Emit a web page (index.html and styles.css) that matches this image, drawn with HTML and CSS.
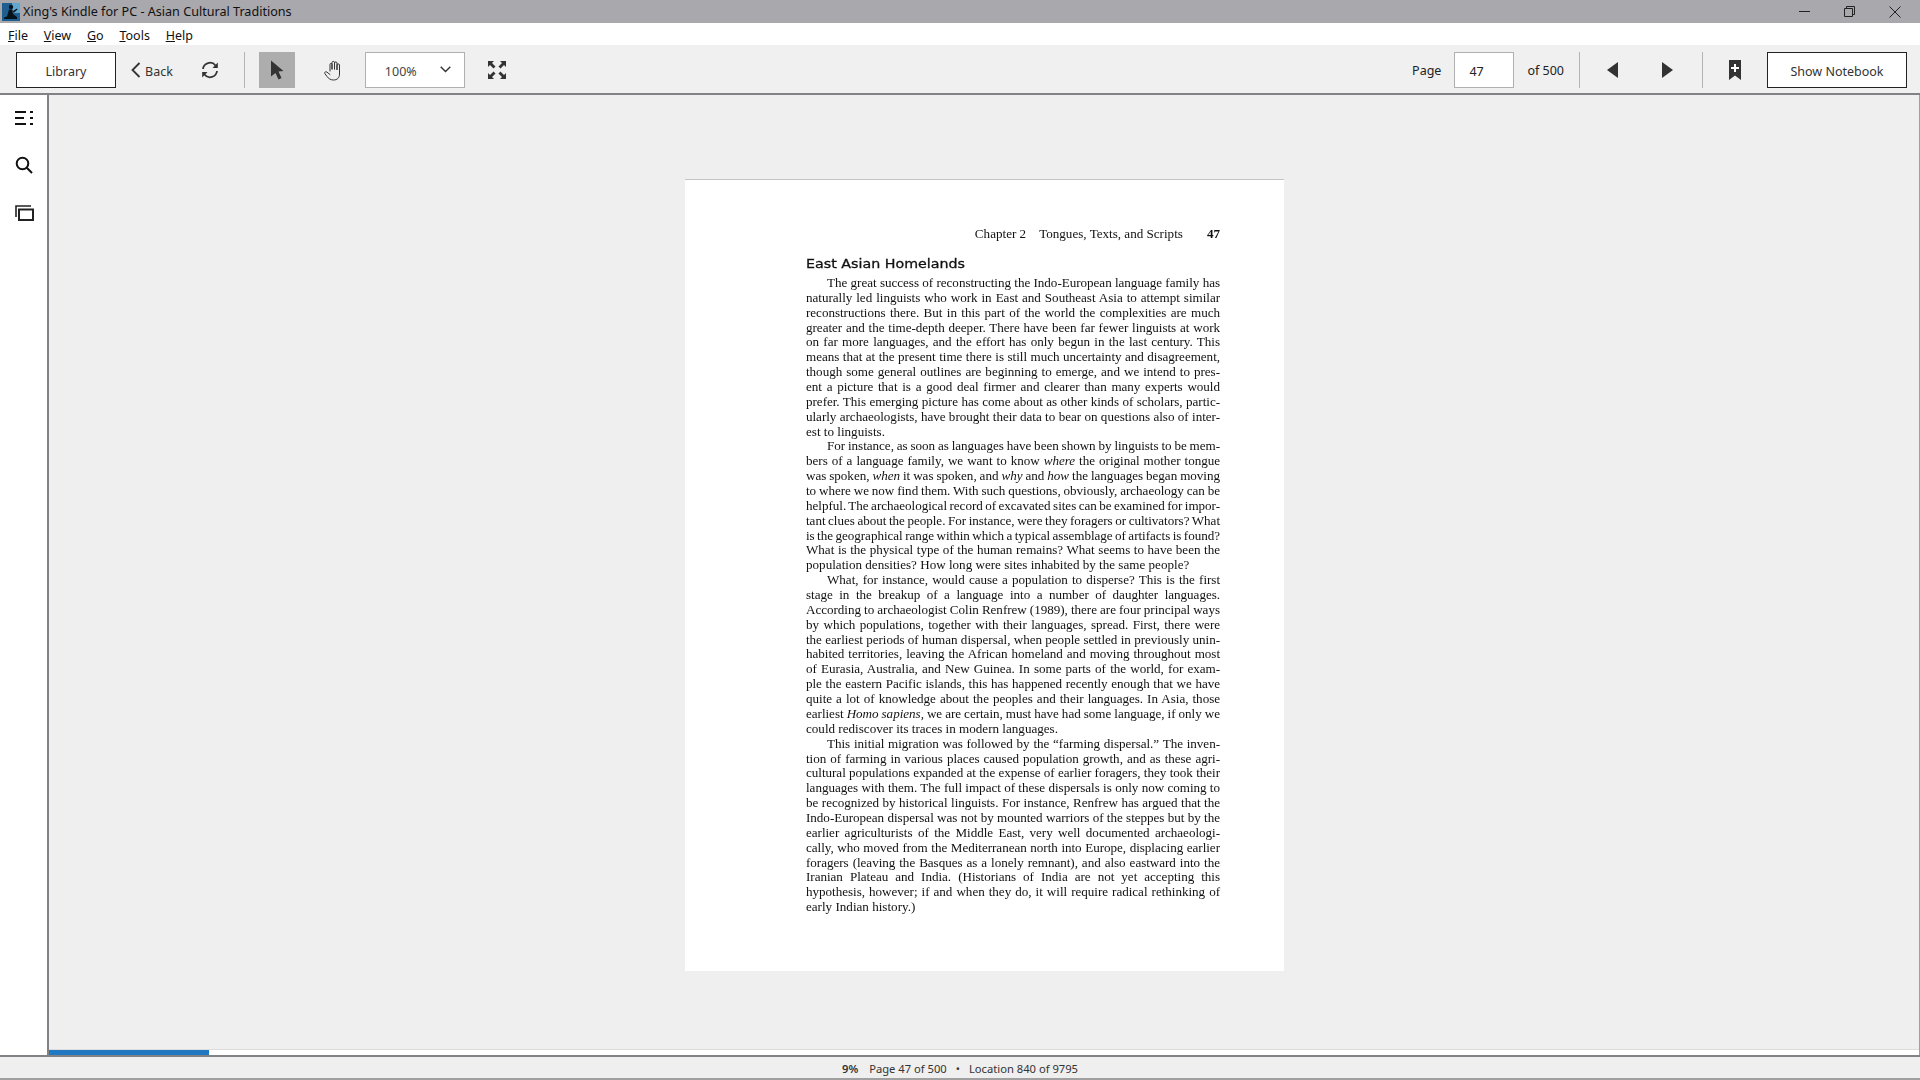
FILE: index.html

```html
<!DOCTYPE html>
<html lang="en">
<head>
  <meta charset="UTF-8" />
  <title>Xing's Kindle for PC - Asian Cultural Traditions</title>
  <link rel="stylesheet" href="styles.css">
</head>
<body>
  <div class="titlebar">
    <svg class="app-icon" width="18" height="18" viewBox="0 0 18 18">
      <rect width="18" height="18" fill="#1f5f8f"/>
      <rect x="10" y="0" width="8" height="10" fill="#5fa6d0"/>
      <circle cx="9" cy="4" r="2.2" fill="#06121c"/>
      <path d="M7 6.5 L10.5 6.5 L11 11 L15 14 L15 16 L2 16 L2 14.5 L5 13.5 Z" fill="#06121c"/>
      <path d="M11 8 L15 5.5 L15.5 6.5 L11.5 10 Z" fill="#06121c"/>
    </svg>
    <span class="title-text">Xing's Kindle for PC - Asian Cultural Traditions</span>
    <div class="window-btns">
      <svg width="11" height="11" viewBox="0 0 11 11"><path d="M0 5.5 H11" stroke="#222" fill="none"/></svg>
      <svg width="11" height="11" viewBox="0 0 11 11"><path d="M0.5 2.5 H8.5 V10.5 H0.5 Z M2.5 2.5 V0.5 H10.5 V8.5 H8.5" stroke="#222" fill="none"/></svg>
      <svg width="12" height="12" viewBox="0 0 12 12"><path d="M0.5 0.5 L11.5 11.5 M11.5 0.5 L0.5 11.5" stroke="#222" fill="none"/></svg>
    </div>
  </div>

  <div class="menubar">
    <span><u>F</u>ile</span>
    <span><u>V</u>iew</span>
    <span><u>G</u>o</span>
    <span><u>T</u>ools</span>
    <span><u>H</u>elp</span>
  </div>

  <div class="toolbar">
    <button class="box-btn library-btn">Library</button>
    <div class="back">
      <svg width="10" height="16" viewBox="0 0 10 16"><path d="M8.5 1 L1.5 8 L8.5 15" stroke="#333" stroke-width="1.8" fill="none"/></svg>
      <span>Back</span>
    </div>
    <svg class="sync-icon" width="18" height="18" viewBox="0 0 18 18">
      <path d="M2 8 A7 7 0 0 1 14.5 4.5" stroke="#333" stroke-width="1.8" fill="none"/>
      <path d="M16.8 1.5 V7 H11.5 Z" fill="#333"/>
      <path d="M16 10 A7 7 0 0 1 3.5 13.5" stroke="#333" stroke-width="1.8" fill="none"/>
      <path d="M1.2 16.5 V11 H6.5 Z" fill="#333"/>
    </svg>
    <div class="sep sep-left"></div>
    <div class="tool-active">
      <svg width="14" height="20" viewBox="0 0 14 20"><path d="M1 0.5 L13.5 11 L8.5 11.5 L11.5 18 L8.5 19.5 L5.5 13 L1 16.5 Z" fill="#333"/></svg>
    </div>
    <svg class="hand-icon" width="20" height="21" viewBox="0 0 20 21" fill="none" stroke="#333" stroke-width="1" stroke-linejoin="round" stroke-linecap="round">
      <path d="M6 11 V4.5 C6 3 8 3 8 4.5 V9 M8 9 V2.5 C8 1 10.500 1 10.500 2.500 V9 M10.500 9 V3 C10.500 1.600 13 1.600 13 3 V9.500 M13 9.500 V5 C13 3.600 15.500 3.600 15.500 5 V14 C15.500 18 13 20 9.500 20 C6.500 20 4.500 18.500 3 16.500 L0.800 13.500 C0.200 12.500 1.500 11 3 12.200 L6 14.500"/>
    </svg>
    <div class="zoom-select">
      <span>100%</span>
      <svg class="zoom-arrow" width="11" height="7" viewBox="0 0 11 7"><path d="M0.700 0.700 L5.500 5.500 L10.300 0.700" stroke="#333" stroke-width="1.400" fill="none"/></svg>
    </div>
    <svg class="full-icon" width="18" height="18" viewBox="0 0 18 18" fill="#333">
      <path d="M0 0 H6 L4 2 L7.500 5.500 L5.500 7.500 L2 4 L0 6 Z"/>
      <path d="M18 0 V6 L16 4 L12.500 7.500 L10.500 5.500 L14 2 L12 0 Z"/>
      <path d="M0 18 V12 L2 14 L5.500 10.500 L7.500 12.500 L4 16 L6 18 Z"/>
      <path d="M18 18 H12 L14 16 L10.500 12.500 L12.500 10.500 L16 14 L18 12 Z"/>
    </svg>

    <div class="toolbar-right">
      <span class="page-label">Page</span>
      <div class="page-input">47</div>
      <span class="page-of">of 500</span>
      <div class="sep"></div>
      <svg class="prev-icon" width="11" height="16" viewBox="0 0 11 16"><path d="M11 0 V16 L0 8 Z" fill="#333"/></svg>
      <svg class="next-icon" width="11" height="16" viewBox="0 0 11 16"><path d="M0 0 V16 L11 8 Z" fill="#333"/></svg>
      <div class="sep sep-second"></div>
      <svg class="mark-icon" width="12" height="20" viewBox="0 0 12 20">
        <path d="M0 0 H12 V20 L6 15.500 L0 20 Z" fill="#333"/>
        <path d="M5 4 H7 V7 H10 V9 H7 V12 H5 V9 H2 V7 H5 Z" fill="#fff"/>
      </svg>
      <button class="box-btn notebook-btn">Show Notebook</button>
    </div>
  </div>

  <div class="content">
    <div class="sidebar">
      <svg width="18" height="14" viewBox="0 0 18 14" fill="#111">
        <rect x="0" y="0" width="11" height="2"/><rect x="15" y="0" width="3" height="2"/>
        <rect x="0" y="6" width="9" height="2"/><rect x="15" y="6" width="3" height="2"/>
        <rect x="0" y="12" width="11" height="2"/><rect x="15" y="12" width="3" height="2"/>
      </svg>
      <svg width="18" height="18" viewBox="0 0 18 18" fill="none" stroke="#111" stroke-width="2">
        <circle cx="7.500" cy="7.500" r="5.800"/><path d="M11.800 11.800 L17 17"/>
      </svg>
      <svg class="cards-icon" width="19" height="16" viewBox="0 0 19 16" fill="none" stroke="#222" stroke-width="1.600">
        <rect x="4" y="4.500" width="14" height="10.500" stroke-width="2"/><path d="M1 12 V1 H16"/>
      </svg>
    </div>

    <div class="reader">
      <div class="reader-main">
        <div class="page">
          <div class="running-head"><span>Chapter 2</span><span class="head-title">Tongues, Texts, and Scripts</span><b>47</b></div>
          <h2><span>East Asian Homelands</span></h2>
          <div class="body-text">
            <div class="line indent">The great success of reconstructing the Indo-European language family has</div>
            <div class="line">naturally led linguists who work in East and Southeast Asia to attempt similar</div>
            <div class="line">reconstructions there. But in this part of the world the complexities are much</div>
            <div class="line">greater and the time-depth deeper. There have been far fewer linguists at work</div>
            <div class="line">on far more languages, and the effort has only begun in the last century. This</div>
            <div class="line">means that at the present time there is still much uncertainty and disagreement,</div>
            <div class="line">though some general outlines are beginning to emerge, and we intend to pres-</div>
            <div class="line">ent a picture that is a good deal firmer and clearer than many experts would</div>
            <div class="line">prefer. This emerging picture has come about as other kinds of scholars, partic-</div>
            <div class="line">ularly archaeologists, have brought their data to bear on questions also of inter-</div>
            <div class="line last">est to linguists.</div>
            <div class="line indent">For instance, as soon as languages have been shown by linguists to be mem-</div>
            <div class="line">bers of a language family, we want to know <i>where</i> the original mother tongue</div>
            <div class="line">was spoken, <i>when</i> it was spoken, and <i>why</i> and <i>how</i> the languages began moving</div>
            <div class="line">to where we now find them. With such questions, obviously, archaeology can be</div>
            <div class="line">helpful. The archaeological record of excavated sites can be examined for impor-</div>
            <div class="line">tant clues about the people. For instance, were they foragers or cultivators? What</div>
            <div class="line">is the geographical range within which a typical assemblage of artifacts is found?</div>
            <div class="line">What is the physical type of the human remains? What seems to have been the</div>
            <div class="line last">population densities? How long were sites inhabited by the same people?</div>
            <div class="line indent">What, for instance, would cause a population to disperse? This is the first</div>
            <div class="line">stage in the breakup of a language into a number of daughter languages.</div>
            <div class="line">According to archaeologist Colin Renfrew (1989), there are four principal ways</div>
            <div class="line">by which populations, together with their languages, spread. First, there were</div>
            <div class="line">the earliest periods of human dispersal, when people settled in previously unin-</div>
            <div class="line">habited territories, leaving the African homeland and moving throughout most</div>
            <div class="line">of Eurasia, Australia, and New Guinea. In some parts of the world, for exam-</div>
            <div class="line">ple the eastern Pacific islands, this has happened recently enough that we have</div>
            <div class="line">quite a lot of knowledge about the peoples and their languages. In Asia, those</div>
            <div class="line">earliest <i>Homo sapiens,</i> we are certain, must have had some language, if only we</div>
            <div class="line last">could rediscover its traces in modern languages.</div>
            <div class="line indent">This initial migration was followed by the “farming dispersal.” The inven-</div>
            <div class="line">tion of farming in various places caused population growth, and as these agri-</div>
            <div class="line">cultural populations expanded at the expense of earlier foragers, they took their</div>
            <div class="line">languages with them. The full impact of these dispersals is only now coming to</div>
            <div class="line">be recognized by historical linguists. For instance, Renfrew has argued that the</div>
            <div class="line">Indo-European dispersal was not by mounted warriors of the steppes but by the</div>
            <div class="line">earlier agriculturists of the Middle East, very well documented archaeologi-</div>
            <div class="line">cally, who moved from the Mediterranean north into Europe, displacing earlier</div>
            <div class="line">foragers (leaving the Basques as a lonely remnant), and also eastward into the</div>
            <div class="line">Iranian Plateau and India. (Historians of India are not yet accepting this</div>
            <div class="line">hypothesis, however; if and when they do, it will require radical rethinking of</div>
            <div class="line last">early Indian history.)</div>
          </div>
        </div>
      </div>
      <div class="progress"><div class="progress-fill"></div></div>
    </div>
  </div>

  <div class="statusbar">
    <span class="status-pct">9%</span>
    <span>Page 47 of 500</span>
    <span>•</span>
    <span>Location 840 of 9795</span>
  </div>
</body>
</html>
```

FILE: styles.css

```css
html, body {
  margin: 0;
  height: 100%;
}
body {
  display: flex;
  flex-direction: column;
  height: 1080px;
  overflow: hidden;
  font-family: 'Noto Sans', 'Open Sans', sans-serif;
  font-size: 12.5px;
  color: #222;
  background-color: #efefef;
}
button {
  font-family: inherit;
  font-size: inherit;
  color: inherit;
  cursor: pointer;
}
svg {
  display: block;
  flex-shrink: 0;
}

/* top window chrome */
.titlebar {
  display: flex;
  align-items: center;
  height: 23px;
  background-color: #a9a8ad;
  color: #111;
  font-size: 12.6px;
}
.app-icon {
  margin-left: 2px;
}
.title-text {
  margin-left: 3px;
}
.window-btns {
  display: flex;
  align-items: center;
  gap: 34px;
  margin-left: auto;
  margin-right: 19px;
}
.menubar {
  display: flex;
  align-items: center;
  gap: 15.800px;
  box-sizing: border-box;
  height: 22px;
  padding-left: 8px;
  padding-top: 3px;
  background-color: white;
  color: #111;
}

/* toolbar */
.toolbar {
  display: flex;
  align-items: center;
  height: 36px;
  padding: 7px 13px 5px 16px;
  background-color: #f0f0f0;
  border-bottom: 2px solid #808285;
}
.box-btn {
  height: 36px;
  padding: 2px 0 0;
  background-color: white;
  border: 1px solid #222;
  color: #333;
}
.library-btn {
  width: 100px;
}
.back {
  display: flex;
  align-items: center;
  gap: 4px;
  margin-left: 15px;
  color: #333;
}
.back span {
  padding-top: 2px;
}
.sync-icon {
  margin-left: 28px;
}
.sep {
  width: 1px;
  height: 36px;
  background-color: #b4b4b4;
}
.sep-left {
  margin-left: 25px;
}
.tool-active {
  display: flex;
  justify-content: center;
  align-items: center;
  width: 36px;
  height: 36px;
  margin-left: 14px;
  background-color: #adadad;
}
.hand-icon {
  margin-left: 29px;
}
.zoom-select {
  display: flex;
  align-items: center;
  justify-content: space-between;
  box-sizing: border-box;
  width: 100px;
  height: 36px;
  margin-left: 21px;
  padding: 2px 13px 0 19px;
  background-color: white;
  border: 1px solid #b0b0b0;
  color: #444;
}
.zoom-arrow {
  margin-top: -4px;
}
.full-icon {
  margin-left: 23px;
}
.toolbar-right {
  display: flex;
  align-items: center;
  margin-left: auto;
}
.page-label {
  padding-top: 1px;
}
.page-input {
  display: flex;
  align-items: center;
  box-sizing: border-box;
  width: 60px;
  height: 36px;
  margin-left: 13px;
  padding: 2px 0 0 14px;
  background-color: white;
  border: 1px solid #b0b0b0;
}
.page-of {
  margin-left: 13px;
  margin-right: 15px;
}
.prev-icon {
  margin-left: 27px;
}
.next-icon {
  margin-left: 44px;
}
.sep-second {
  margin-left: 29px;
}
.mark-icon {
  margin-left: 26px;
}
.notebook-btn {
  width: 140px;
  margin-left: 26px;
}

/* reading area */
.content {
  display: flex;
  height: 960px;
}
.sidebar {
  display: flex;
  flex-direction: column;
  align-items: center;
  gap: 31px;
  box-sizing: border-box;
  width: 49px;
  padding: 16px 0 0 0;
  background-color: white;
  border-right: 2px solid #808285;
}
.cards-icon {
  margin-left: 1px;
}
.reader {
  display: flex;
  flex-direction: column;
  flex: 1;
  border-right: 1px solid #a0a0a0;
}
.reader-main {
  flex: 1;
  display: flex;
  justify-content: center;
  padding: 84px 0 0 1px;
  min-height: 0;
}
.page {
  box-sizing: border-box;
  width: 599px;
  height: 792px;
  padding: 46px 64px 0 121px;
  background-color: white;
  border-top: 1px solid #c4c4c4;
  color: #111;
  font-family: 'Liberation Serif', serif;
  font-size: 13.100px;
  filter: blur(0.3px);
}
.running-head {
  display: flex;
  justify-content: flex-end;
  line-height: 16px;
}
.head-title {
  margin-left: 13px;
  margin-right: 24px;
}
.page h2 {
  margin: 14px 0 0;
  font-family: 'DejaVu Sans', sans-serif;
  font-size: 12.500px;
  font-weight: normal;
  -webkit-text-stroke: 0.300px #111;
  line-height: 16px;
}
.page h2 span {
  display: inline-block;
  transform: scaleX(1.14);
  transform-origin: left center;
}
.body-text {
  margin-top: 4px;
}
.line {
  height: 14.870px;
  line-height: 14.870px;
  word-spacing: -1.200px;
  letter-spacing: -0.030px;
  text-align: justify;
  text-align-last: justify;
}
.line.last {
  word-spacing: 0;
  letter-spacing: 0;
  text-align-last: left;
}
.line.indent {
  text-indent: 21px;
}
.progress {
  height: 6px;
  background-color: white;
  border-top: 1px solid #dcdcdc;
  box-sizing: border-box;
}
.progress-fill {
  width: 160px;
  height: 100%;
  background-color: #1f78c1;
}

/* bottom status */
.statusbar {
  display: flex;
  justify-content: center;
  align-items: center;
  gap: 9px;
  height: 21px;
  background-color: #efefef;
  border-top: 2px solid #808285;
  border-bottom: 2px solid #a0a0a0;
  font-size: 11.200px;
  color: #333;
}
.statusbar span {
  padding-top: 2px;
}
.status-pct {
  margin-right: 2px;
  font-weight: 600;
}
```
